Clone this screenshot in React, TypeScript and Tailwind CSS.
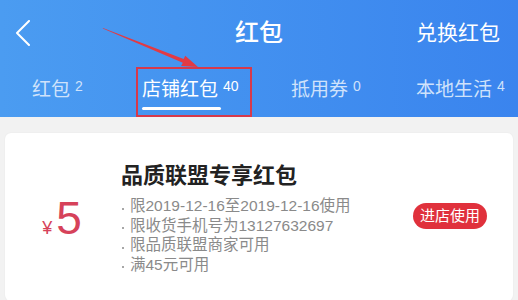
import React from 'react';

const tabs = [
  { label: '红包', count: '2', width: 'w-[110px]', active: false },
  { label: '店铺红包', count: '40', width: 'w-[149px]', active: true },
  { label: '抵用券', count: '0', width: 'w-[125px]', active: false },
  { label: '本地生活', count: '4', width: 'w-auto', active: false },
];

const rules = [
  '限2019-12-16至2019-12-16使用',
  '限收货手机号为13127632697',
  '限品质联盟商家可用',
  '满45元可用',
];

export default function App() {
  return (
    <div
      className="relative h-[300px] w-[518px] overflow-hidden bg-[#f2f2f2]"
      style={{ fontFamily: '"Liberation Sans", "Noto Sans CJK SC", sans-serif' }}
    >
      <header className="h-[117px] bg-gradient-to-r from-[#4b9cf1] to-[#3a84ee] text-white">
        <div className="grid h-[66px] grid-cols-[1fr_auto_1fr] items-center">
          <div className="pl-[15px]">
            <svg width="16" height="26" viewBox="0 0 16 26" fill="none">
              <polyline points="14,1 2,13 14,25" stroke="white" strokeWidth="2" strokeLinecap="round" strokeLinejoin="round" />
            </svg>
          </div>
          <h1 className="text-[24px] leading-[30px] font-medium">红包</h1>
          <div className="pr-[18px] text-right text-[21px] leading-[30px]">兑换红包</div>
        </div>
        <nav className="flex items-start pt-[11px] pl-[32px]">
          {tabs.map((t) => (
            <div key={t.label} className={`${t.width} flex shrink-0 flex-col`}>
              <div className={`flex items-start leading-[26px] ${t.active ? 'text-white' : 'text-[#cfe2fb]'}`}>
                <span className="text-[19px]">{t.label}</span>
                <span className="ml-[5px] text-[14px] leading-[18px]">{t.count}</span>
              </div>
              {t.active && <div className="mt-[4px] h-[3px] w-[79px] rounded-full bg-white" />}
            </div>
          ))}
        </nav>
      </header>

      <div className="mx-[5px] mt-[16px] flex items-center rounded-[6px] bg-white pt-[28px] pb-[27px] shadow-[0_0_2px_rgba(0,0,0,0.06)]">
        <div className="flex w-[116px] items-baseline justify-center pr-[2px] text-[#d6425a]">
          <span className="mr-[4px] text-[18px]">¥</span>
          <span className="text-[46px] leading-[50px]">5</span>
        </div>
        <div className="flex-1">
          <h2 className="text-[22px] leading-[30px] font-bold text-[#222]">品质联盟专享红包</h2>
          <ul className="mt-[5px] text-[15.5px] leading-[19.5px] text-[#8a8a8a]">
            {rules.map((r) => (
              <li key={r} className="flex items-center">
                <span className="ml-[1px] mt-[6px] mr-[6px] h-[2px] w-[2px] rounded-full bg-[#8a8a8a]" />
                <span>{r}</span>
              </li>
            ))}
          </ul>
        </div>
        <button className="mr-[26px] mb-[4px] h-[26px] w-[74px] rounded-full bg-[#e0313c] text-[15px] leading-[26px] text-white">
          进店使用
        </button>
      </div>

      {/* annotation: red box and arrow */}
      <div className="absolute left-[136px] top-[67px] h-[50px] w-[116px] border-2 border-[#d6394b]" />
      <svg className="absolute left-0 top-0" width="518" height="120" viewBox="0 0 518 120">
        <polygon
          points="103,28 183.6,59 185.3,55.8 198,67 181.1,66 182.8,62.8 102.8,28.6"
          fill="#e23a44"
        />
      </svg>
    </div>
  );
}
